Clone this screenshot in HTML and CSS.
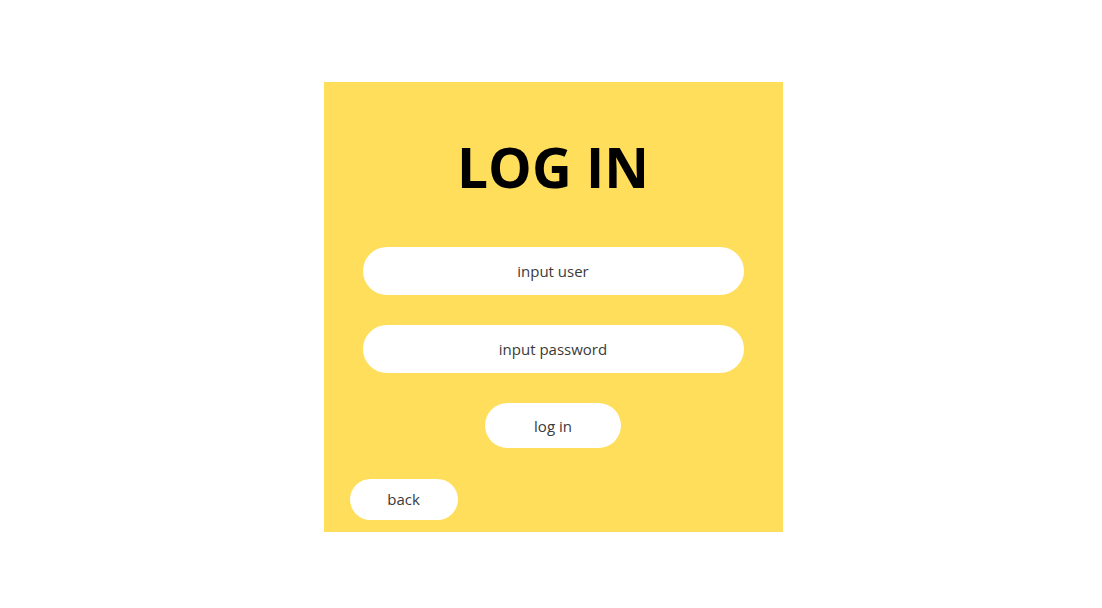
FILE: index.html
```html
<!DOCTYPE html>
<html lang="en">
<head>
<meta charset="utf-8">
<title>Log in</title>
<link rel="stylesheet" href="styles.css">
</head>
<body>
<main class="page">
  <section class="card">
    <h1 class="title">LOG IN</h1>
    <input class="field" type="text" placeholder="input user">
    <input class="field field-gap" type="password" placeholder="input password">
    <button class="btn btn-login" type="button">log in</button>
    <button class="btn btn-back" type="button">back</button>
  </section>
</main>
</body>
</html>
```

FILE: styles.css
```css
html, body {
  margin: 0;
  padding: 0;
  background: #ffffff;
}

body {
  font-family: "Open Sans", "Liberation Sans", sans-serif;
}

.page {
  display: flex;
  justify-content: center;
  padding: 82px 0 0 4px;
}

.card {
  box-sizing: border-box;
  width: 459px;
  height: 450px;
  background: #ffde5c;
  display: flex;
  flex-direction: column;
  align-items: center;
  padding: 47px 0 12px;
}

.title {
  margin: 0;
  font-size: 55px;
  line-height: 76px;
  font-weight: 700;
  color: #000000;
}

.field {
  box-sizing: border-box;
  width: 381px;
  height: 48px;
  margin-top: 42px;
  border: none;
  border-radius: 24px;
  background: #ffffff;
  font-family: inherit;
  font-size: 15px;
  color: #3a3a3a;
  text-align: center;
  outline: none;
  padding: 0 20px;
}

.field-gap {
  margin-top: 30px;
}

.field::placeholder {
  color: #3a3a3a;
  opacity: 1;
}

.btn {
  border: none;
  background: #ffffff;
  font-family: inherit;
  font-size: 15px;
  color: #3a3a3a;
  padding: 0;
  cursor: pointer;
}

.btn-login {
  width: 136px;
  height: 45px;
  border-radius: 23px;
  margin-top: 30px;
}

.btn-back {
  align-self: flex-start;
  margin-left: 26px;
  margin-top: 31px;
  width: 108px;
  height: 41px;
  border-radius: 21px;
  padding-bottom: 2px;
}
```
